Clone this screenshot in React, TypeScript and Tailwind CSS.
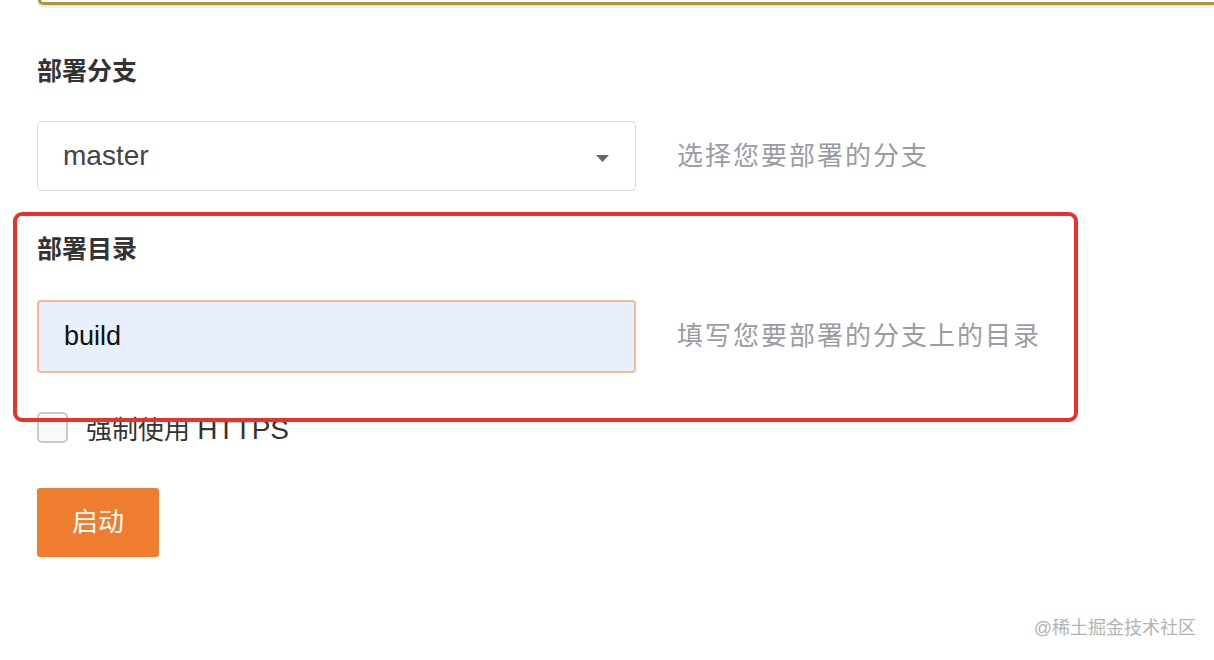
import { useState } from "react";

const font = {
  fontFamily: '"Liberation Sans", "Noto Sans CJK SC", sans-serif',
};

const HelpText = ({ children }: { children: string }) => (
  <span className="ml-[41px] text-[26px] tracking-[2px] text-[#9a9ca3]">
    {children}
  </span>
);

export default function App() {
  const [branch, setBranch] = useState("master");
  const [dir, setDir] = useState("build");
  const [https, setHttps] = useState(false);

  return (
    <div
      className="relative w-[1214px] h-[660px] overflow-hidden bg-white"
      style={font}
    >
      {/* bottom edge of the panel above */}
      <div className="ml-[38px] h-[5px] rounded-bl-[8px] border-l-[3px] border-b-[3px] border-[#b3933f] shadow-[0_2px_3px_rgba(0,0,0,0.12)]" />

      <div className="pl-[37px] flex flex-col">
        <div className="mt-[47px] h-[38px] leading-[38px] text-[25px] font-bold text-[#333]">
          部署分支
        </div>

        <div className="mt-[31px] flex items-center">
          <div className="relative w-[599px] h-[70px] rounded-[4px] border border-[#dcdcdc] bg-white">
            <select
              value={branch}
              onChange={(e) => setBranch(e.target.value)}
              className="w-full h-full appearance-none bg-transparent pl-[25px] pr-10 text-[28px] text-[#444] outline-none"
              style={font}
            >
              <option value="master">master</option>
              <option value="develop">develop</option>
            </select>
            <svg
              className="absolute right-[26px] top-[33px] pointer-events-none"
              width="13"
              height="7"
              viewBox="0 0 13 7"
            >
              <path d="M0 0h13L6.5 7z" fill="#666" />
            </svg>
          </div>
          <HelpText>选择您要部署的分支</HelpText>
        </div>

        <div className="relative">
          {/* red annotation frame */}
          <div className="absolute left-[-24px] top-[21px] w-[1065px] h-[210px] rounded-[9px] border-[4px] border-[#e5352a] pointer-events-none z-10" />

          <div className="mt-[39px] h-[38px] leading-[38px] text-[25px] font-bold text-[#333]">
            部署目录
          </div>

          <div className="mt-[32px] flex items-center">
            <input
              value={dir}
              onChange={(e) => setDir(e.target.value)}
              className="w-[599px] h-[73px] rounded-[4px] border-2 border-[#f2b99a] bg-[#e8f0fe] pl-[25px] text-[27px] text-[#111] outline-none"
              style={font}
            />
            <HelpText>填写您要部署的分支上的目录</HelpText>
          </div>
        </div>

        <label className="mt-[39px] flex items-center h-[31px] cursor-pointer">
          <input
            type="checkbox"
            checked={https}
            onChange={(e) => setHttps(e.target.checked)}
            className="appearance-none w-[31px] h-[31px] rounded-[5px] border-2 border-[#c9c9c9] bg-[#fafafa] checked:bg-[#ee7d30]"
          />
          <span className="ml-[18px] mt-[4px] text-[26px] text-[#333]">
            强制使用 <span className="text-[28px]">HTTPS</span>
          </span>
        </label>

        <div className="mt-[45px]">
          <button className="w-[122px] h-[69px] rounded-[3px] bg-[#ee7d30] text-[26px] text-white">
            启动
          </button>
        </div>
      </div>

      <div className="absolute right-[18px] bottom-[18px] text-[18px] text-[#b3b3b3]">
        @稀土掘金技术社区
      </div>
    </div>
  );
}
